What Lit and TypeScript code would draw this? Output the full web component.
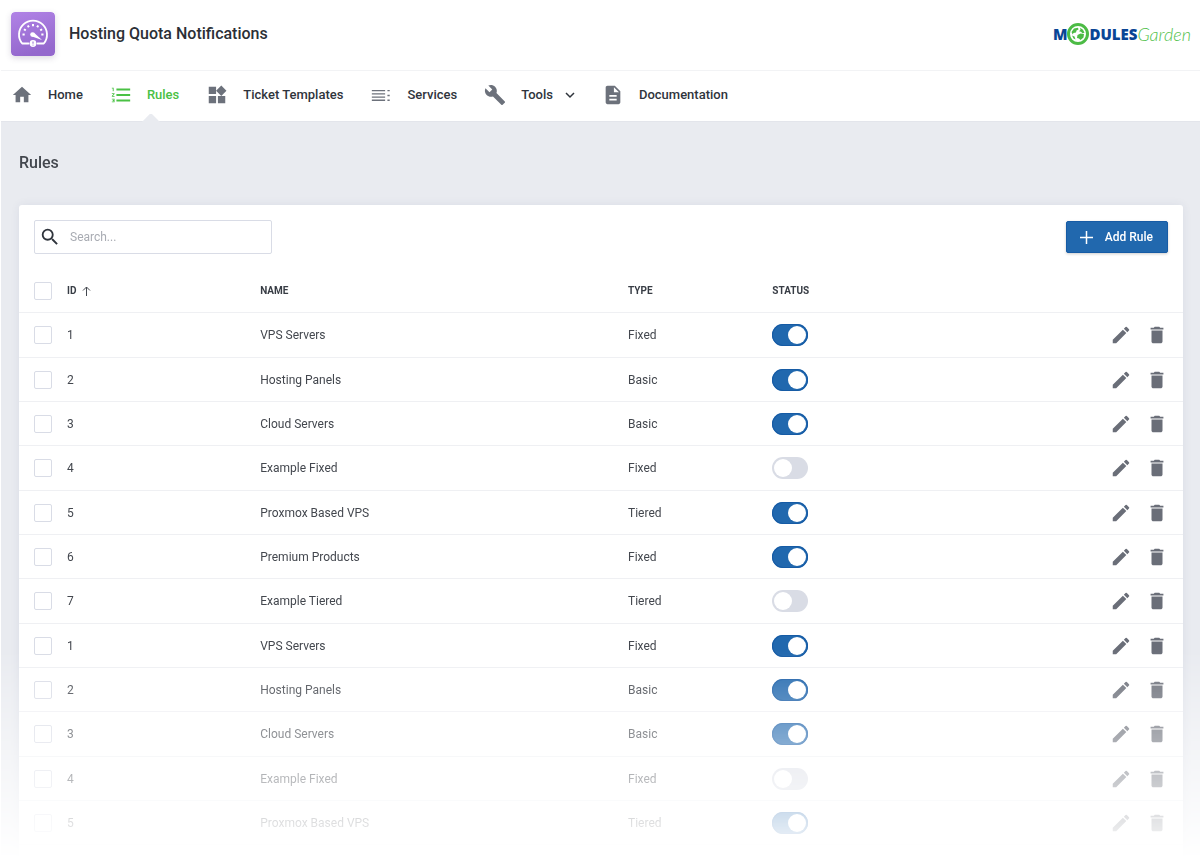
import { LitElement, html, css, svg, nothing } from "lit";
import { customElement, property, state } from "lit/decorators.js";

type Rule = { id: number; name: string; type: string; enabled: boolean };

const RULES: Rule[] = [
  { id: 1, name: "VPS Servers", type: "Fixed", enabled: true },
  { id: 2, name: "Hosting Panels", type: "Basic", enabled: true },
  { id: 3, name: "Cloud Servers", type: "Basic", enabled: true },
  { id: 4, name: "Example Fixed", type: "Fixed", enabled: false },
  { id: 5, name: "Proxmox Based VPS", type: "Tiered", enabled: true },
  { id: 6, name: "Premium Products", type: "Fixed", enabled: true },
  { id: 7, name: "Example Tiered", type: "Tiered", enabled: false },
  { id: 1, name: "VPS Servers", type: "Fixed", enabled: true },
  { id: 2, name: "Hosting Panels", type: "Basic", enabled: true },
  { id: 3, name: "Cloud Servers", type: "Basic", enabled: true },
  { id: 4, name: "Example Fixed", type: "Fixed", enabled: false },
  { id: 5, name: "Proxmox Based VPS", type: "Tiered", enabled: true },
];

// Glyphs are drawn on a 24 x 24 grid.
const ICONS: Record<string, string> = {
  home: "M10 20v-6h4v6h5v-8h3L12 3 2 12h3v8z",
  rules:
    "M2 17h2v.5H3v1h1v.5H2v1h3v-4H2zm1-9h1V4H2v1h1zm-1 3h1.800L2 13.100v.9h3v-1H3.200L5 10.900V10H2zm5-6v2h15V5zm0 14h15v-2H7zm0-6h15v-2H7z",
  widgets:
    "M13 13v8h8v-8zM3 21h8v-8H3zM3 3v8h8V3zm13.660-1.310L11 7.340 16.660 13l5.660-5.660z",
  services:
    "M2 6.500h14.500V8H2zM2 10h14.500v1.500H2zM2 13.500h14.500V15H2zM2 17h14.500v1.500H2zM19 6.500h2.500V8H19zM19 11.750h2.500v1.500H19zM19 17h2.500v1.500H19z",
  tools:
    "M22.700 19l-9.100-9.100c.9-2.300.4-5-1.500-6.900-2-2-5-2.400-7.400-1.300L9 6 6 9 1.600 4.700C.4 7.100.9 10.100 2.900 12.100c1.900 1.900 4.600 2.400 6.900 1.500l9.100 9.100c.4.4 1 .4 1.400 0l2.300-2.300c.5-.4.5-1.100.1-1.400z",
  doc: "M14 2H6c-1.100 0-2 .9-2 2v16c0 1.100.9 2 2 2h12c1.100 0 2-.9 2-2V8zm2 16H8v-2h8zm0-4H8v-2h8zm-3-5V3.500L18.500 9z",
  search:
    "M15.500 14h-.79l-.28-.27A6.470 6.470 0 0 0 16 9.500 6.500 6.500 0 1 0 9.500 16c1.610 0 3.090-.59 4.230-1.570l.27.28v.79l5 4.990L20.490 19zm-6 0C7.010 14 5 11.990 5 9.500S7.010 5 9.500 5 14 7.010 14 9.500 11.990 14 9.500 14z",
  edit: "M3 17.250V21h3.750L17.810 9.940l-3.750-3.750zM20.710 7.040a1 1 0 0 0 0-1.410l-2.340-2.340a1 1 0 0 0-1.410 0l-1.830 1.830 3.750 3.750z",
  trash: "M6 19c0 1.100.9 2 2 2h8c1.100 0 2-.9 2-2V7H6zM19 4h-3.500l-1-1h-5l-1 1H5v2h14z",
};

const icon = (name: string, size: number) =>
  html`<svg width=${size} height=${size} viewBox="0 0 24 24" fill="currentColor" aria-hidden="true">
    <path d=${ICONS[name]}></path>
  </svg>`;

@customElement("app-brand")
class AppBrand extends LitElement {
  static styles = css`
    :host {
      display: flex;
      align-items: center;
      justify-content: space-between;
      height: 71px;
      box-sizing: border-box;
      padding: 0 9px 3px 10px;
      border-bottom: 1px solid #f2f3f5;
      background: #fff;
    }
    .product {
      display: flex;
      align-items: center;
      gap: 14px;
    }
    .badge {
      display: block;
      border-radius: 4px;
      box-shadow: 0 2px 6px rgba(60, 50, 90, 0.18);
    }
    .title {
      margin: 0;
      font-size: 16px;
      line-height: 24px;
      font-weight: 500;
      color: #2b2f36;
    }
    .logo {
      display: flex;
      align-items: center;
      line-height: 24px;
      text-decoration: none;
    }
    .strong {
      font-family: "Open Sans", sans-serif;
      font-size: 15px;
      font-weight: 800;
      color: #0a4595;
    }
    .light {
      font-family: Lato, sans-serif;
      font-size: 18px;
      font-weight: 300;
      font-style: italic;
      color: #52c14c;
    }
  `;

  render() {
    const ticks = [-90, -60, -30, 0, 30, 60, 90];
    return html`
      <div class="product">
        <svg class="badge" width="44" height="44" viewBox="0 0 44 44" fill="none" aria-hidden="true">
          <defs>
            <linearGradient id="violet" x1="0" y1="0" x2="0.3" y2="1">
              <stop offset="0" stop-color="#b183e6"></stop>
              <stop offset="1" stop-color="#9468cd"></stop>
            </linearGradient>
          </defs>
          <rect width="44" height="44" rx="4" fill="url(#violet)"></rect>
          <path
            d="M17.500 31.500H11.200A14 14 0 1 1 32.800 31.500H26.500"
            stroke="#fff"
            stroke-width="1.800"
            stroke-linecap="round"
            stroke-linejoin="round"
          ></path>
          ${ticks.map(
            (a) => svg`<path d="M22 12v2.200" stroke="#fff" stroke-width="2" transform="rotate(${a} 22 22.500)"></path>`,
          )}
          <path d="M20.500 24.300 22.800 20.500 31 28z" fill="#fff"></path>
          <circle cx="21.500" cy="22.500" r="2.300" fill="#fff"></circle>
          <circle cx="22" cy="31.500" r="3.400" fill="#fff"></circle>
          <path d="M22 29.500v2.200M22 32.700v.8" stroke="#9468cd" stroke-width="1"></path>
        </svg>
        <h1 class="title">Hosting Quota Notifications</h1>
      </div>
      <a class="logo" href="#" aria-label="ModulesGarden">
        <span class="strong">M</span>
        <svg width="22" height="24" viewBox="0 0 22 24" fill="none" aria-hidden="true">
          <circle cx="11" cy="12" r="9.500" stroke="#4cbb45" stroke-width="3"></circle>
          <path
            d="M4.500 10 7 6.500l4-.8.5 1.800-2 1-.5 2-2.500.5-.8 1.500zM13 5.800l3 2 1.500 3-2 .5-1.500-1.500-2-.5 1.500-1.500zM10.500 13l3-1.500 3.500.5-.5 3.500-3 2.500-1.500-1.500-2-.5zM5 13.500l2.500 1 1 3-2-1z"
            fill="#4cbb45"
          ></path>
        </svg>
        <span class="strong">DULES</span><span class="light">Garden</span>
      </a>
    `;
  }
}

@customElement("app-nav")
class AppNav extends LitElement {
  static styles = css`
    :host {
      display: block;
      background: #fff;
    }
    .bar {
      display: flex;
      height: 51px;
      box-sizing: border-box;
      border-bottom: 1px solid #e3e5eb;
    }
    .link {
      position: relative;
      display: flex;
      align-items: center;
      gap: 14px;
      padding: 0 17px 2px 9px;
      font-size: 13px;
      line-height: 20px;
      font-weight: 500;
      color: #2f343c;
      text-decoration: none;
      white-space: nowrap;
    }
    .glyph {
      display: grid;
      place-items: center;
      width: 24px;
      height: 24px;
      color: #6c717b;
    }
    .menu {
      display: flex;
      align-items: center;
      gap: 12px;
    }
    .active,
    .active .glyph {
      color: #4ac144;
    }
    .active::after {
      content: "";
      position: absolute;
      left: 42px;
      bottom: -1px;
      width: 18px;
      height: 8px;
      background: #e9ebf0;
      clip-path: polygon(0 100%, 44% 0, 56% 0, 100% 100%);
    }
  `;

  render() {
    const items = [
      { icon: "home", label: "Home", size: 22 },
      { icon: "rules", label: "Rules", size: 22, active: true },
      { icon: "widgets", label: "Ticket Templates", size: 22 },
      { icon: "services", label: "Services", size: 22 },
      { icon: "tools", label: "Tools", size: 22, menu: true },
      { icon: "doc", label: "Documentation", size: 22 },
    ];
    return html`<nav class="bar" aria-label="Main">
      ${items.map(
        (i) => html`<a class="link ${i.active ? "active" : ""}" href="#">
          <span class="glyph">${icon(i.icon, i.size)}</span>
          <span class="menu">
            ${i.label}
            ${i.menu
              ? html`<svg width="10" height="8" viewBox="0 0 10 8" fill="none" aria-hidden="true">
                  <path d="M1 2l4 4 4-4" stroke="#2f343c" stroke-width="1.500"></path>
                </svg>`
              : nothing}
          </span>
        </a>`,
      )}
    </nav>`;
  }
}

@customElement("rules-table")
class RulesTable extends LitElement {
  @property({ attribute: false }) rules: Rule[] = [];

  static styles = css`
    :host {
      display: block;
    }
    .table {
      width: 100%;
      table-layout: fixed;
      border-collapse: separate;
      border-spacing: 0;
      font-size: 12px;
      line-height: 16px;
      color: #43474e;
    }
    .pick {
      width: 48px;
    }
    .id {
      width: 16.6%;
    }
    .name {
      width: 31.6%;
    }
    .type {
      width: 12.4%;
    }
    th,
    td {
      box-sizing: border-box;
      height: 44px;
      padding: 0;
      border-bottom: 1px solid #eff0f3;
      text-align: left;
      font-weight: 400;
      vertical-align: middle;
    }
    .head {
      font-size: 10px;
      font-weight: 700;
      color: #383d45;
    }
    .row:nth-child(3n + 1) td {
      height: 45px;
    }
    .sort {
      display: inline-flex;
      align-items: center;
      gap: 6px;
      padding: 0;
      border: 0;
      background: none;
      font: inherit;
      color: inherit;
    }
    .check {
      appearance: none;
      display: block;
      box-sizing: border-box;
      width: 18px;
      height: 18px;
      margin: 0 0 0 15px;
      border: 1px solid #d9dce6;
      border-radius: 2px;
      background: #fff;
    }
    .check:checked {
      border-color: #2168ae;
      background: #2168ae;
    }
    .switch {
      appearance: none;
      display: flex;
      box-sizing: border-box;
      width: 36px;
      height: 22px;
      margin: 0;
      padding: 2px;
      border-radius: 11px;
      background: #d9dce5;
    }
    .switch::before {
      content: "";
      width: 18px;
      height: 18px;
      border-radius: 9px;
      background: #fff;
    }
    .switch:checked {
      justify-content: flex-end;
      background: #2168ae;
      box-shadow: inset 0 0 0 1px #165ba5;
    }
    .actions {
      display: flex;
      justify-content: flex-end;
      gap: 14px;
      padding-right: 15px;
    }
    .action {
      display: grid;
      place-items: center;
      width: 22px;
      height: 22px;
      padding: 0;
      border: 0;
      background: none;
      color: #6a6e78;
      cursor: pointer;
    }
  `;

  render() {
    return html`<table class="table">
      <thead>
        <tr>
          <th class="head pick"><input class="check" type="checkbox" aria-label="Select all" /></th>
          <th class="head id">
            <button class="sort" type="button">
              ID
              <svg width="9" height="10" viewBox="0 0 9 10" fill="none" aria-hidden="true">
                <path d="M4.500 10V1M1 4.500 4.500 1 8 4.500" stroke="#43474e"></path>
              </svg>
            </button>
          </th>
          <th class="head name">NAME</th>
          <th class="head type">TYPE</th>
          <th class="head">STATUS</th>
          <th class="head"></th>
        </tr>
      </thead>
      <tbody>
        ${this.rules.map(
          (r) => html`<tr class="row">
            <td><input class="check" type="checkbox" aria-label="Select ${r.name}" /></td>
            <td>${r.id}</td>
            <td>${r.name}</td>
            <td>${r.type}</td>
            <td>
              <input class="switch" type="checkbox" role="switch" aria-label="Status of ${r.name}" .checked=${r.enabled} />
            </td>
            <td>
              <div class="actions">
                <button class="action" type="button" aria-label="Edit">${icon("edit", 22)}</button>
                <button class="action" type="button" aria-label="Delete">${icon("trash", 22)}</button>
              </div>
            </td>
          </tr>`,
        )}
      </tbody>
    </table>`;
  }
}

@customElement("app-root")
class AppRoot extends LitElement {
  @state() private rules = RULES;

  static styles = css`
    :host {
      display: flex;
      flex-direction: column;
      box-sizing: border-box;
      min-height: 100vh;
      padding-left: 1px;
      background: #fff;
      font-family: Roboto, "Liberation Sans", sans-serif;
    }
    .main {
      flex: 1;
      display: flex;
      flex-direction: column;
      padding: 29px 17px 0 18px;
      background: #e9ebf0;
      mask-image: linear-gradient(to top, transparent 0, #000 210px);
    }
    .heading {
      margin: 0 0 30px;
      font-size: 16px;
      line-height: 24px;
      font-weight: 500;
      color: #43474e;
    }
    .card {
      flex: 1;
      border-radius: 3px 3px 0 0;
      background: #fff;
      box-shadow: 0 0 10px rgba(50, 60, 110, 0.08);
    }
    .toolbar {
      display: flex;
      align-items: center;
      justify-content: space-between;
      padding: 15px;
    }
    .search {
      display: flex;
      align-items: center;
      gap: 9px;
      box-sizing: border-box;
      width: 238px;
      height: 34px;
      padding: 0 4px;
      border: 1px solid #d9dce6;
      border-radius: 2px;
      color: #2f343c;
    }
    .field {
      flex: 1;
      min-width: 0;
      padding: 0;
      border: 0;
      outline: 0;
      background: none;
      font: 12px/18px Roboto, sans-serif;
      color: #43474e;
    }
    .field::placeholder {
      color: #a9acb3;
    }
    .add {
      display: flex;
      align-items: center;
      gap: 12px;
      height: 32px;
      padding: 0 14px 0 13px;
      border: 1px solid #165ba5;
      border-radius: 2px;
      background: #2168ae;
      box-shadow: 0 1px 3px rgba(0, 0, 0, 0.2);
      font: 500 12px/16px Roboto, sans-serif;
      color: #fff;
      cursor: pointer;
    }
  `;

  render() {
    return html`
      <app-brand></app-brand>
      <app-nav></app-nav>
      <main class="main">
        <h2 class="heading">Rules</h2>
        <section class="card">
          <div class="toolbar">
            <label class="search">
              ${icon("search", 22)}
              <input class="field" type="search" placeholder="Search..." aria-label="Search rules" />
            </label>
            <button class="add" type="button">
              <svg width="13" height="13" viewBox="0 0 13 13" fill="none" aria-hidden="true">
                <path d="M6.500 0v13M0 6.500h13" stroke="#fff" stroke-width="1.500"></path>
              </svg>
              Add Rule
            </button>
          </div>
          <rules-table .rules=${this.rules}></rules-table>
        </section>
      </main>
    `;
  }
}
